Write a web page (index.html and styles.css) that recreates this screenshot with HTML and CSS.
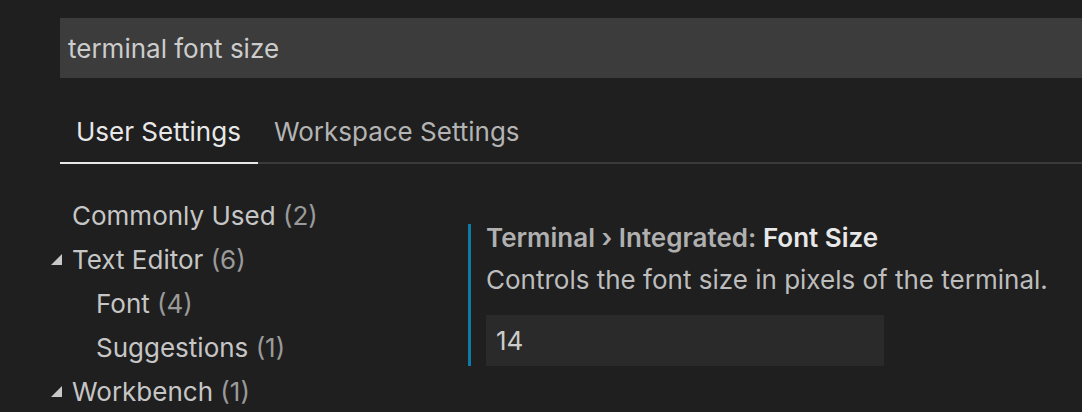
FILE: index.html
```html
<!DOCTYPE html>
<html>
<head>
<meta charset="utf-8">
<link rel="stylesheet" href="styles.css">
</head>
<body>
<div class="page">
  <div class="search">terminal font size</div>
  <div class="tabs">
    <div class="tab active">User Settings</div>
    <div class="tab">Workspace Settings</div>
  </div>
  <div class="main">
    <div class="tree">
      <div class="row"><span class="tw"></span>Commonly Used <span class="count">(2)</span></div>
      <div class="row"><span class="tw"><span class="tri"></span></span>Text Editor <span class="count">(6)</span></div>
      <div class="row sub"><span class="tw"></span>Font <span class="count">(4)</span></div>
      <div class="row sub"><span class="tw"></span>Suggestions <span class="count">(1)</span></div>
      <div class="row"><span class="tw"><span class="tri"></span></span>Workbench <span class="count">(1)</span></div>
    </div>
    <div class="setting">
      <div class="title">Terminal › Integrated: <b>Font Size</b></div>
      <div class="desc">Controls the font size in pixels of the terminal.</div>
      <div class="input">14</div>
    </div>
  </div>
</div>
</body>
</html>
```
FILE: styles.css
```css
html, body {
  margin: 0;
  padding: 0;
  background: #1f1f1f;
  overflow: hidden;
}
body {
  font-family: Inter, "Noto Sans", sans-serif;
  color: #cccccc;
  width: 1082px;
  height: 412px;
}
.page {
  padding: 18px 0 0 60px;
}
.search {
  height: 60px;
  background: #3c3c3c;
  box-sizing: border-box;
  padding-left: 8px;
  display: flex;
  align-items: center;
  font-size: 26px;
  color: #cccccc;
}
.tabs {
  margin-top: 30px;
  display: flex;
  border-bottom: 2px solid #3a3a3a;
  height: 54px;
}
.tab {
  padding: 0 17px 7px 16px;
  font-size: 26px;
  display: flex;
  align-items: center;
  color: #b4b4b4;
  margin-bottom: -2px;
  border-bottom: 2px solid transparent;
}
.tab.active {
  color: #e8e8e8;
  border-bottom-color: #e8e8e8;
}
.main {
  display: flex;
  margin-left: -60px;
  padding-top: 29px;
}
.tree {
  width: 468px;
  flex: none;
}
.row {
  height: 44px;
  display: flex;
  align-items: center;
  font-size: 26px;
  color: #c6c6c6;
  white-space: pre;
}
.tw {
  width: 72px;
  flex: none;
  display: flex;
  justify-content: flex-end;
  padding-right: 10px;
  box-sizing: border-box;
}
.row.sub .tw { width: 96px; }
.tri {
  width: 0;
  height: 0;
  border-left: 11px solid transparent;
  border-bottom: 11px solid #c8c8c8;
}
.count { color: #9a9a9a; }
.setting {
  margin-top: 31px;
  border-left: 3px solid #0e7aa8;
  padding-left: 15px;
  height: 142px;
}
.title {
  font-size: 26px;
  font-weight: 600;
  color: #b0b0b0;
  line-height: 28px;
}
.title b { color: #e8e8e8; font-weight: 600; }
.desc {
  margin-top: 14px;
  font-size: 26px;
  color: #bdbdbd;
  line-height: 28px;
}
.input {
  margin-top: 21px;
  width: 398px;
  height: 51px;
  background: #2a2a2a;
  box-sizing: border-box;
  padding-left: 10px;
  display: flex;
  align-items: center;
  font-size: 26px;
  color: #cccccc;
}
```
